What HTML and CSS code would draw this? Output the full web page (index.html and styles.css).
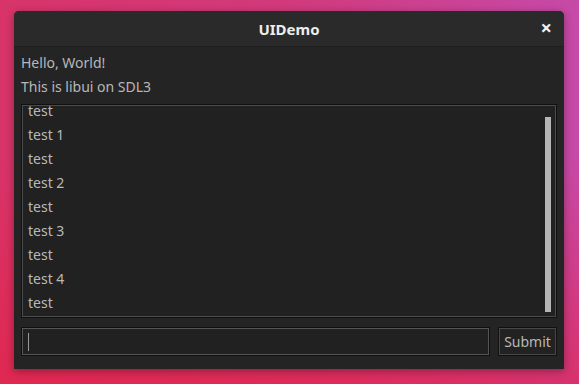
FILE: index.html
```html
<!DOCTYPE html>
<html>
<head>
<meta charset="utf-8">
<link rel="stylesheet" href="styles.css">
</head>
<body>
<div class="window">
  <div class="titlebar">
    <span class="title">UIDemo</span>
    <span class="close">×</span>
  </div>
  <div class="content">
    <div class="label">Hello, World!</div>
    <div class="label">This is libui on SDL3</div>
    <div class="listbox">
      <div class="items">
        <div class="item">test</div>
        <div class="item">test 1</div>
        <div class="item">test</div>
        <div class="item">test 2</div>
        <div class="item">test</div>
        <div class="item">test 3</div>
        <div class="item">test</div>
        <div class="item">test 4</div>
        <div class="item">test</div>
      </div>
      <div class="scrollbar"></div>
    </div>
    <div class="inputrow">
      <div class="input"><span class="caret"></span></div>
      <div class="button">Submit</div>
    </div>
  </div>
</div>
</body>
</html>
```
FILE: styles.css
```css
html, body {
  margin: 0;
  height: 100%;
}
body {
  width: 579px;
  height: 384px;
  overflow: hidden;
  box-sizing: border-box;
  padding: 11px 0 0 14px;
  background:
    linear-gradient(180deg, rgba(220,40,80,0) 40%, rgba(230,30,60,0.55) 100%),
    linear-gradient(90deg, #d8346a 0%, #d23a7c 50%, #c64aa8 100%);
  font-family: "Noto Sans", "Open Sans", sans-serif;
}
.window {
  width: 550px;
  height: 358px;
  background: #242424;
  border-radius: 5px 5px 0 0;
  box-shadow: 0 2px 8px rgba(0,0,0,0.35);
  display: flex;
  flex-direction: column;
  overflow: hidden;
}
.titlebar {
  height: 35px;
  flex: none;
  background: #2a2a2a;
  border-bottom: 1px solid #1f1f1f;
  position: relative;
  display: flex;
  align-items: center;
  justify-content: center;
}
.title {
  color: #ededed;
  font-weight: bold;
  font-size: 15px;
}
.close {
  position: absolute;
  right: 12px;
  top: 6px;
  color: #f2f2f2;
  font-size: 20px;
  font-weight: bold;
  line-height: 22px;
}
.content {
  padding: 4px 7px 0 7px;
  display: flex;
  flex-direction: column;
}
.label {
  height: 24px;
  line-height: 24px;
  font-size: 14px;
  color: #b8b8b8;
}
.listbox {
  margin-top: 5px;
  height: 214px;
  box-sizing: border-box;
  border: 1px solid #101010;
  box-shadow: inset 0 0 0 1px #4c4c4c;
  background: #212121;
  position: relative;
  overflow: hidden;
}
.items {
  margin-top: -6px;
  padding-left: 6px;
}
.item {
  height: 24px;
  line-height: 24px;
  font-size: 14px;
  color: #b8b8b8;
}
.scrollbar {
  position: absolute;
  right: 5px;
  top: 12px;
  bottom: 5px;
  width: 6px;
  background: #b6b6b6;
}
.inputrow {
  margin-top: 9px;
  display: flex;
  gap: 8px;
  height: 29px;
}
.input {
  width: 469px;
  box-sizing: border-box;
  border: 1px solid #101010;
  box-shadow: inset 0 0 0 1px #555555;
  background: #212121;
  display: flex;
  align-items: center;
  padding-left: 6px;
}
.caret {
  width: 1px;
  height: 18px;
  background: #9a9a9a;
}
.button {
  width: 59px;
  box-sizing: border-box;
  border: 1px solid #101010;
  box-shadow: inset 0 0 0 1px #484848;
  background: #222222;
  color: #b8b8b8;
  font-size: 14px;
  display: flex;
  align-items: center;
  justify-content: center;
}
```
